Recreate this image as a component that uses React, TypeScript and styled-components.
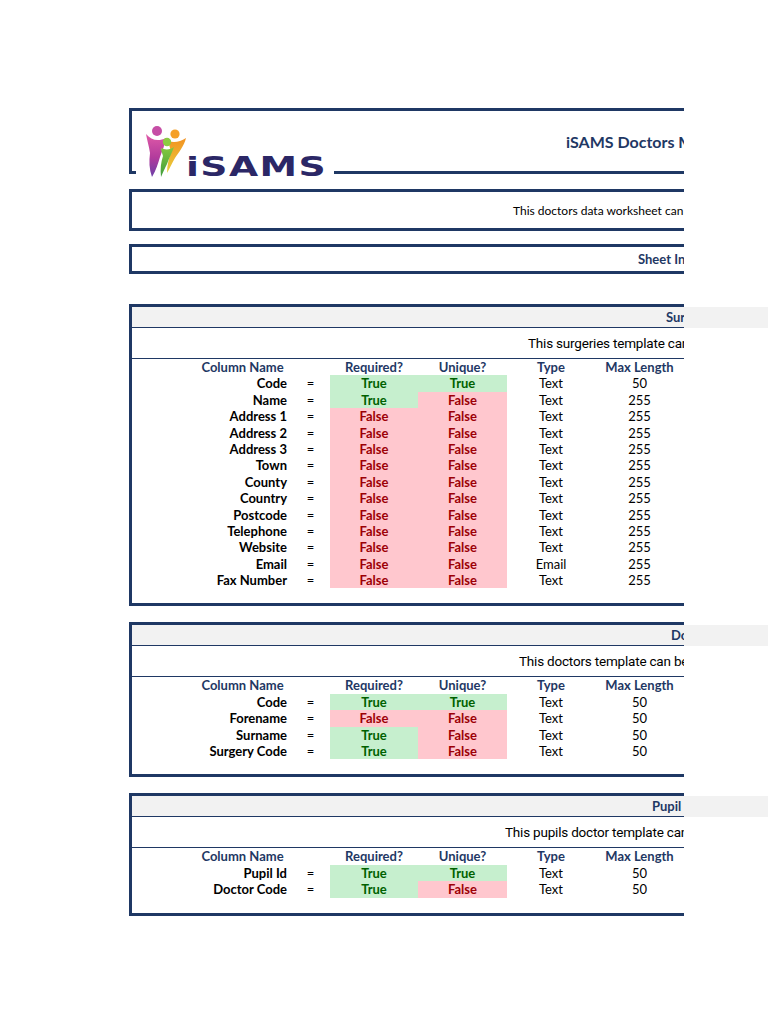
import styled, { createGlobalStyle } from "styled-components";

const NAVY = "#1f3864";

type Row = {
    name: string;
    required: boolean;
    unique: boolean;
    type: string;
    max: number;
};

type Section = {
    title: string;
    titleIndent: number;
    desc: string;
    descIndent: number;
    rows: Row[];
};

const plain = (name: string): Row => ({ name, required: false, unique: false, type: "Text", max: 255 });

const sections: Section[] = [
    {
        title: "Surgeries",
        titleIndent: 534,
        desc: "This surgeries template can be used to import surgery details into iSAMS",
        descIndent: 396,
        rows: [
            { name: "Code", required: true, unique: true, type: "Text", max: 50 },
            { name: "Name", required: true, unique: false, type: "Text", max: 255 },
            plain("Address 1"),
            plain("Address 2"),
            plain("Address 3"),
            plain("Town"),
            plain("County"),
            plain("Country"),
            plain("Postcode"),
            plain("Telephone"),
            plain("Website"),
            { name: "Email", required: false, unique: false, type: "Email", max: 255 },
            plain("Fax Number"),
        ],
    },
    {
        title: "Doctors",
        titleIndent: 539,
        desc: "This doctors template can be used to import doctor details into iSAMS",
        descIndent: 387,
        rows: [
            { name: "Code", required: true, unique: true, type: "Text", max: 50 },
            { name: "Forename", required: false, unique: false, type: "Text", max: 50 },
            { name: "Surname", required: true, unique: false, type: "Text", max: 50 },
            { name: "Surgery Code", required: true, unique: false, type: "Text", max: 50 },
        ],
    },
    {
        title: "Pupil Doctors",
        titleIndent: 520,
        desc: "This pupils doctor template can link pupils to their doctors",
        descIndent: 373,
        rows: [
            { name: "Pupil Id", required: true, unique: true, type: "Text", max: 50 },
            { name: "Doctor Code", required: true, unique: false, type: "Text", max: 50 },
        ],
    },
];

const App = () => {
    return (
        <>
            <GlobalStyle />
            <Sheet>
                <Banner>
                    <Logo>
                        <LogoMark />
                        <LogoText>iSAMS</LogoText>
                    </Logo>
                    <BannerTitle>iSAMS Doctors Module Import Templates</BannerTitle>
                </Banner>
                <InfoBox $indent={381}>
                    This doctors data worksheet can be used to import surgeries, doctors and pupil links
                </InfoBox>
                <NoteBox $indent={506}>Sheet Information</NoteBox>
                {sections.map((s) => (
                    <SectionBox key={s.title}>
                        <Band>
                            <BandTitle $indent={s.titleIndent}>{s.title}</BandTitle>
                            <BandTail />
                        </Band>
                        <Desc $indent={s.descIndent}>{s.desc}</Desc>
                        <DataGrid>
                            <HeadCell>Column Name</HeadCell>
                            <HeadCell />
                            <HeadCell>Required?</HeadCell>
                            <HeadCell>Unique?</HeadCell>
                            <HeadCell>Type</HeadCell>
                            <HeadCell>Max Length</HeadCell>
                            {s.rows.map((r) => (
                                <RowCells key={r.name} row={r} />
                            ))}
                        </DataGrid>
                    </SectionBox>
                ))}
            </Sheet>
        </>
    );
};

const RowCells = ({ row }: { row: Row }) => (
    <>
        <NameCell>{row.name}</NameCell>
        <EqCell>=</EqCell>
        <FlagCell $ok={row.required}>{row.required ? "True" : "False"}</FlagCell>
        <FlagCell $ok={row.unique}>{row.unique ? "True" : "False"}</FlagCell>
        <PlainCell>{row.type}</PlainCell>
        <PlainCell>{row.max}</PlainCell>
    </>
);

// three little people above the wordmark
const LogoMark = () => (
    <svg width="46" height="60" viewBox="0 0 46 60" style={{ display: "block" }}>
        <defs>
            <linearGradient id="pink" x1="0" y1="0" x2="0" y2="1">
                <stop offset="0" stopColor="#e05aa8" />
                <stop offset="0.55" stopColor="#b23b9c" />
                <stop offset="1" stopColor="#6a3fa8" />
            </linearGradient>
            <linearGradient id="orange" x1="0" y1="0" x2="0" y2="1">
                <stop offset="0" stopColor="#f39222" />
                <stop offset="1" stopColor="#e8cf3c" />
            </linearGradient>
            <linearGradient id="green" x1="0" y1="0" x2="0" y2="1">
                <stop offset="0" stopColor="#86c93f" />
                <stop offset="1" stopColor="#3f9c3c" />
            </linearGradient>
        </defs>
        <circle cx="13" cy="11" r="5" fill="#c64ea6" />
        <path
            d="M2 14 C7 20 14 22 22 18 C21 25 18 31 16 37 C14 44 12 50 8 57 C5 49 5 41 6 33 C5 26 3 20 2 14 Z"
            fill="url(#pink)"
        />
        <circle cx="31" cy="14" r="4.6" fill="#f5a028" />
        <path
            d="M24 21 C30 23 36 22 42 18 C40 26 35 32 31 38 C28 43 26 48 23 53 C23 45 25 38 27 32 C26 28 25 24 24 21 Z"
            fill="url(#orange)"
        />
        <circle cx="23" cy="22" r="4.2" fill="#8ccb42" />
        <path
            d="M17 28 C21 30 26 30 30 27 C28 33 25 38 23 44 C21 48 19 52 17 57 C16 49 17 42 19 36 C18 33 17 30 17 28 Z"
            fill="url(#green)"
        />
    </svg>
);

const GlobalStyle = createGlobalStyle`
    html, body {
        margin: 0;
        padding: 0;
        background: #fff;
    }
    body {
        font-family: Lato, "Open Sans", sans-serif;
        color: #000;
        overflow-x: hidden;
    }
`;

const Sheet = styled.div`
    width: 768px;
    min-height: 1024px;
    box-sizing: border-box;
    padding: 108px 0 0 129px;
    display: flex;
    flex-direction: column;
    overflow: hidden;
`;

const Banner = styled.div`
    width: 555px;
    height: 66px;
    box-sizing: border-box;
    border: 3px solid ${NAVY};
    border-right: none;
    display: flex;
    align-items: flex-end;
`;

const Logo = styled.div`
    position: relative;
    z-index: 1;
    flex-shrink: 0;
    width: 198px;
    height: 60px;
    margin: 0 0 -9px 4px;
    box-sizing: border-box;
    padding-left: 8px;
    background: #fff;
    display: flex;
    align-items: flex-end;
`;

const LogoText = styled.span`
    display: inline-block;
    margin: 0 0 3px -4px;
    font-family: "DejaVu Sans", sans-serif;
    font-weight: bold;
    font-size: 26px;
    line-height: 20px;
    letter-spacing: 1px;
    color: #2b2766;
    transform: scaleX(1.45);
    transform-origin: left bottom;
`;

const BannerTitle = styled.div`
    flex: 1;
    min-width: 0;
    align-self: center;
    overflow: hidden;
    white-space: nowrap;
    padding-left: 232px;
    font-weight: bold;
    font-size: 16px;
    color: ${NAVY};
`;

const InfoBox = styled.div<{ $indent: number }>`
    width: 555px;
    height: 42px;
    margin-top: 15px;
    box-sizing: border-box;
    border: 3px solid ${NAVY};
    border-right: none;
    display: flex;
    align-items: center;
    overflow: hidden;
    white-space: nowrap;
    padding-left: ${(p) => p.$indent}px;
    font-size: 12px;
`;

const NoteBox = styled(InfoBox)`
    height: 30px;
    margin-top: 13px;
    font-weight: bold;
    font-size: 13px;
    color: ${NAVY};
`;

const SectionBox = styled.section`
    width: 555px;
    box-sizing: border-box;
    margin-top: 16px;
    border: 3px solid ${NAVY};
    border-right: none;
    padding-bottom: 15px;

    &:first-of-type {
        margin-top: 30px;
    }
`;

const Band = styled.div`
    display: flex;
    width: 636px;
    background: #f2f2f2;
`;

const BandTitle = styled.div<{ $indent: number }>`
    width: 552px;
    flex-shrink: 0;
    box-sizing: border-box;
    height: 21px;
    line-height: 20px;
    border-bottom: 1px solid ${NAVY};
    overflow: hidden;
    white-space: nowrap;
    padding-left: ${(p) => p.$indent}px;
    font-weight: bold;
    font-size: 13px;
    color: ${NAVY};
`;

const BandTail = styled.div`
    flex: 1;
`;

const Desc = styled.div<{ $indent: number }>`
    height: 31px;
    box-sizing: border-box;
    display: flex;
    align-items: center;
    border-bottom: 1px solid ${NAVY};
    overflow: hidden;
    white-space: nowrap;
    padding-left: ${(p) => p.$indent}px;
    font-family: Roboto, "Liberation Sans", sans-serif;
    font-size: 13.5px;
    letter-spacing: -0.2px;
`;

const DataGrid = styled.div`
    display: grid;
    grid-template-columns: 93px 41px 88px 89px 88px 89px;
    grid-auto-rows: 16.4px;
    padding-left: 64px;
    font-size: 13px;
    line-height: 16.4px;
`;

const HeadCell = styled.div`
    text-align: center;
    font-weight: bold;
    color: ${NAVY};
    white-space: nowrap;
`;

const NameCell = styled.div`
    text-align: right;
    padding-right: 2px;
    font-weight: bold;
    white-space: nowrap;
`;

const EqCell = styled.div`
    text-align: center;
    padding-left: 2px;
`;

const FlagCell = styled.div<{ $ok: boolean }>`
    text-align: center;
    font-weight: bold;
    background: ${(p) => (p.$ok ? "#c6efce" : "#ffc7ce")};
    color: ${(p) => (p.$ok ? "#006100" : "#9c0006")};
`;

const PlainCell = styled.div`
    text-align: center;
`;

export default App;
